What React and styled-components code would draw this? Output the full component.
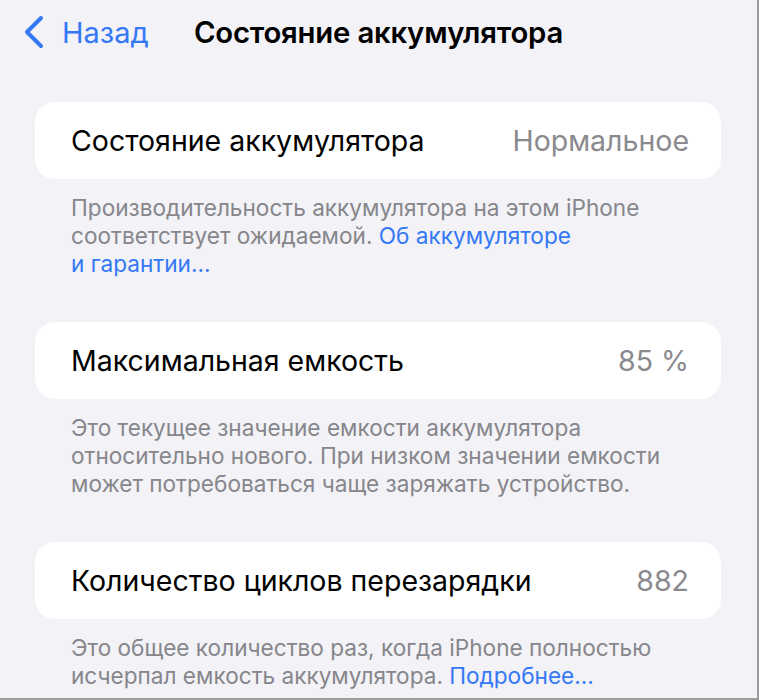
import React from "react";
import styled, { createGlobalStyle } from "styled-components";

const GlobalStyle = createGlobalStyle`
  html, body {
    margin: 0;
    padding: 0;
    background: #f2f2f7;
  }
  * {
    box-sizing: border-box;
  }
`;

const Page = styled.div`
  width: 759px;
  height: 700px;
  overflow: hidden;
  background: #f2f2f7;
  border-right: 2px solid #9c9c9c;
  border-bottom: 2px solid #9c9c9c;
  font-family: Inter, "Liberation Sans", Arial, sans-serif;
`;

const NavBar = styled.div`
  display: grid;
  grid-template-columns: 1fr auto 1fr;
  align-items: center;
  height: 64px;
`;

const BackButton = styled.a`
  display: flex;
  align-items: center;
  gap: 17px;
  padding-left: 23px;
  color: #3478f6;
  font-size: 29px;
  text-decoration: none;
  cursor: pointer;
`;

const NavTitle = styled.h1`
  margin: 0;
  font-size: 29.3px;
  font-weight: 600;
  color: #000;
  letter-spacing: -0.2px;
`;

const Content = styled.div`
  padding: 38px 36px 0 35px;
`;

const Section = styled.section`
  margin-bottom: 44px;
`;

const Card = styled.div`
  display: flex;
  align-items: center;
  justify-content: space-between;
  height: 77px;
  padding: 0 32px 0 36px;
  background: #fff;
  border-radius: 20px;
`;

const Label = styled.span`
  font-size: 28.5px;
  color: #000;
`;

const Value = styled.span`
  font-size: 28.5px;
  color: #8a8a8e;
`;

const Footer = styled.p`
  margin: 0;
  padding: 15px 36px 0 36px;
  font-size: 22.6px;
  line-height: 28px;
  color: #86868b;
  white-space: nowrap;
`;

const Link = styled.a`
  color: #3478f6;
  text-decoration: none;
`;

const Chevron = () => (
  <svg width="22" height="34" viewBox="0 0 22 34" fill="none">
    <path
      d="M18 3 L4 17 L18 31"
      stroke="#3478f6"
      strokeWidth="4"
      strokeLinecap="round"
      strokeLinejoin="round"
    />
  </svg>
);

export default function App() {
  return (
    <Page>
      <GlobalStyle />
      <NavBar>
        <BackButton>
          <Chevron />
          Назад
        </BackButton>
        <NavTitle>Состояние аккумулятора</NavTitle>
        <div />
      </NavBar>
      <Content>
        <Section>
          <Card>
            <Label>Состояние аккумулятора</Label>
            <Value>Нормальное</Value>
          </Card>
          <Footer>
            Производительность аккумулятора на этом iPhone
            <br />
            соответствует ожидаемой. <Link>Об аккумуляторе</Link>
            <br />
            <Link>и гарантии…</Link>
          </Footer>
        </Section>
        <Section>
          <Card>
            <Label>Максимальная емкость</Label>
            <Value>85 %</Value>
          </Card>
          <Footer>
            Это текущее значение емкости аккумулятора
            <br />
            относительно нового. При низком значении емкости
            <br />
            может потребоваться чаще заряжать устройство.
          </Footer>
        </Section>
        <Section>
          <Card>
            <Label>Количество циклов перезарядки</Label>
            <Value>882</Value>
          </Card>
          <Footer>
            Это общее количество раз, когда iPhone полностью
            <br />
            исчерпал емкость аккумулятора. <Link>Подробнее…</Link>
          </Footer>
        </Section>
      </Content>
    </Page>
  );
}
